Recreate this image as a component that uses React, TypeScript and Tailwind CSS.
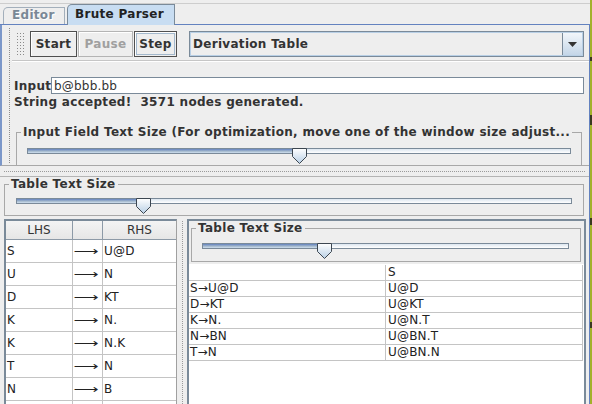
import React from "react";

const F = "font-['DejaVu_Sans',sans-serif]";

function Thumb({ gid }: { gid: string }) {
  return (
    <svg width="15" height="16" viewBox="0 0 15 16" className="block">
      <defs>
        <linearGradient id={gid} x1="0" y1="0" x2="0" y2="1">
          <stop offset="0" stopColor="#ffffff" />
          <stop offset="1" stopColor="#b8cfe5" />
        </linearGradient>
      </defs>
      <path d="M0.5 0.5 H14.5 V8.5 L7.5 15.5 L0.5 8.5 Z" fill={`url(#${gid})`} stroke="#3c4650" />
    </svg>
  );
}

function Slider({ track, fill, thumb, gid }: { track: string; fill: string; thumb: string; gid: string }) {
  return (
    <div className={`relative h-[16px] ${track}`}>
      <div className="mt-[5px] h-[6px] w-full border border-[#7a8a99] bg-[linear-gradient(#dce6f0,#ffffff)] flex">
        <div className={`h-full ${fill} bg-[linear-gradient(#6382bf,#a3b8cc_55%,#d0e0f0)]`} />
      </div>
      <div className={`absolute top-0 ${thumb}`}>
        <Thumb gid={gid} />
      </div>
    </div>
  );
}

function Legend({ children }: { children: React.ReactNode }) {
  return (
    <legend className="ml-[4px] px-[2px] text-[12px] font-bold leading-[14px] tracking-[0.3px] text-[#333333] whitespace-nowrap">
      {children}
    </legend>
  );
}

const lhsRows = [
  ["S", "U@D"],
  ["U", "N"],
  ["D", "KT"],
  ["K", "N."],
  ["K", "N.K"],
  ["T", "N"],
  ["N", "B"],
  ["", ""],
];

const derivRows = [
  ["S\u2192U@D", "U@D"],
  ["D\u2192KT", "U@KT"],
  ["K\u2192N.", "U@N.T"],
  ["N\u2192BN", "U@BN.T"],
  ["T\u2192N", "U@BN.N"],
];

export default function App() {
  return (
    <div className={`w-[592px] h-[404px] bg-[#eeeeee] overflow-hidden flex ${F} text-[#333333]`}>
      <div className="w-[590px] h-full flex flex-col">
        {/* top strip */}
        <div className="h-[4px] shrink-0 border-b border-[#cdcdcd]" />
        {/* tabs */}
        <div className="h-[20px] shrink-0 flex items-end pl-[3px]">
          <div className="h-[17px] w-[62px] border-t border-l border-r border-[#a3afbb] rounded-tl-[5px] pl-[8px] text-[12px] font-bold leading-[14px] tracking-[0.3px] text-[#7a8896] [text-shadow:1px_1px_0_#ffffff]">
            Editor
          </div>
          <div className="ml-[2px] h-[21px] w-[108px] -mb-[1px] relative z-10 border-t border-l border-r border-[#7a8a99] rounded-tl-[5px] bg-[#c8ddf2] pl-[7px] text-[12px] font-bold leading-[19px] tracking-[0.3px] text-[#222222]">
            Brute Parser
          </div>
        </div>
        {/* content */}
        <div className="flex-1 min-h-0 flex flex-col border-t border-r border-[#6382bf]">
          {/* top section */}
          <div className="h-[141px] shrink-0 flex border-b border-[#a8a8a8] border-l-2 border-l-[#7b97c9]">
            <div className="w-[10px] shrink-0 pt-[3px] pb-[2px]">
              <div className="ml-[7px] h-full border-l border-dotted border-[#8c8c8c]" />
            </div>
            <div className="flex-1 flex flex-col">
              {/* toolbar */}
              <div className="h-[36px] shrink-0 flex items-start pt-[6px] border-b border-[#c6c6c6] shadow-[0_1px_0_#ffffff]">
                <div className="ml-[4px] mt-[1px] w-[10px] h-[25px] bg-[radial-gradient(#8a8a8a_0.7px,transparent_0.8px)] bg-[length:3px_3px]" />
                <div className="ml-[4px] w-[47px] h-[26px] border border-[#4f4f4f] shadow-[inset_1px_1px_0_#ffffff] flex items-center justify-center text-[12px] font-bold leading-[14px] tracking-[0.3px] text-[#333333]">
                  Start
                </div>
                <div className="ml-[1px] w-[55px] h-[26px] border border-[#b4b4b4] shadow-[inset_1px_1px_0_#ffffff] flex items-center justify-center text-[12px] font-bold leading-[14px] tracking-[0.3px] text-[#a0a0a0]">
                  Pause
                </div>
                <div className="ml-[1px] w-[43px] h-[26px] border border-[#4f4f4f] shadow-[inset_1px_1px_0_#ffffff] p-[1px] flex">
                  <div className="flex-1 border border-[#a3b8cc] flex items-center justify-center text-[12px] font-bold leading-[14px] tracking-[0.3px] text-[#333333]">
                    Step
                  </div>
                </div>
                <div className="ml-[12px] w-[395px] h-[26px] border border-[#7a8a99] shadow-[inset_0_0_0_1px_#b8cfe5] bg-[#eeeeee] flex">
                  <div className="flex-1 pl-[3px] flex items-center text-[12px] font-bold leading-[14px] tracking-[0.3px] text-[#333333]">
                    Derivation Table
                  </div>
                  <div className="w-[20px] my-[1px] mr-[1px] border-l border-[#7a8a99] bg-[linear-gradient(#f2f6fa,#dbe6f1_50%,#c4d6e8)] flex items-center justify-center">
                    <svg width="9" height="5" viewBox="0 0 9 5" className="block">
                      <path d="M0 0 H9 L4.5 5 Z" fill="#333333" />
                    </svg>
                  </div>
                </div>
              </div>
              {/* input row */}
              <div className="mt-[16px] h-[17px] flex items-center">
                <div className="pl-[2px] w-[39px] text-[12px] font-bold leading-[14px] tracking-[0.3px] text-[#333333]">Input</div>
                <div className="w-[533px] h-[17px] border border-[#7a8a99] bg-white pl-[2px] flex items-center text-[12px] leading-[14px] tracking-[0.2px] text-[#333333]">
                  b@bbb.bb
                </div>
              </div>
              <div className="mt-[1px] pl-[2px] h-[14px] text-[12px] font-bold leading-[14px] tracking-[0.3px] text-[#333333] whitespace-pre">
                String accepted!  3571 nodes generated.
              </div>
              <fieldset className="mt-[16px] ml-[4px] w-[566px] border border-[#a8a8a8]">
                <Legend>Input Field Text Size (For optimization, move one of the window size adjust...</Legend>
                <div className="pl-[10px] pt-[4px] pb-[1px]">
                  <Slider track="w-[544px]" fill="w-[272px]" thumb="left-[265px]" gid="g1" />
                </div>
              </fieldset>
            </div>
          </div>
          {/* horizontal divider */}
          <div className="h-[10px] shrink-0 pt-[5px] px-[4px]">
            <div className="border-t border-dotted border-[#9a9a9a]" />
          </div>
          {/* lower section */}
          <div className="flex-1 min-h-0 flex flex-col border-t border-[#b4b4b4]">
            <fieldset className="ml-[4px] w-[580px] border border-[#a8a8a8] shrink-0">
              <Legend>Table Text Size</Legend>
              <div className="pl-[11px] pt-[2px] pb-[1px]">
                <Slider track="w-[556px]" fill="w-[127px]" thumb="left-[120px]" gid="g2" />
              </div>
            </fieldset>
            <div className="mt-[3px] ml-[4px] flex-1 min-h-0 flex">
              {/* left table */}
              <div className="w-[173px] border-l-2 border-t-2 border-[#7a8a99] border-r border-r-[#a0a0a0] bg-white flex flex-col overflow-hidden">
                <div className="h-[19px] shrink-0 flex bg-[linear-gradient(#f4f4f4,#e6e6e6)] border-b border-[#8d9aa7] text-[12px] leading-[14px] text-[#333333]">
                  <div className="w-[67px] border-r border-[#8d9aa7] flex items-center justify-center">LHS</div>
                  <div className="w-[30px] border-r border-[#8d9aa7]" />
                  <div className="flex-1 flex items-center justify-center">RHS</div>
                </div>
                {lhsRows.map((r, i) => (
                  <div key={i} className="h-[23px] shrink-0 flex border-b border-[#c4c4c4] text-[12px] leading-[14px] tracking-[0.2px] text-[#222222]">
                    <div className="w-[67px] border-r border-[#c4c4c4] pl-[1px] flex items-center">{r[0]}</div>
                    <div className="w-[30px] border-r border-[#c4c4c4] pr-[4px] flex items-center justify-end">
                      <span className="inline-block origin-right scale-x-[1.45]">{r[0] ? "\u27F6" : ""}</span>
                    </div>
                    <div className="flex-1 pl-[1px] flex items-center">{r[1]}</div>
                  </div>
                ))}
              </div>
              {/* vertical divider */}
              <div className="w-[10px] shrink-0 pt-[2px]">
                <div className="ml-[5px] h-full border-l border-dotted border-[#9a9a9a]" />
              </div>
              {/* right panel */}
              <div className="w-[399px] shrink-0 border-l-2 border-t-2 border-r-2 border-[#7a8a99] flex flex-col">
                <fieldset className="ml-[2px] w-[390px] border border-[#a8a8a8] shrink-0">
                  <Legend>Table Text Size</Legend>
                  <div className="pl-[10px] pt-[3px] pb-[2px]">
                    <Slider track="w-[367px]" fill="w-[122px]" thumb="left-[115px]" gid="g3" />
                  </div>
                </fieldset>
                <div className="mt-[2px] flex-1 bg-white pt-[1px]">
                  <div className="w-[394px]">
                    <div className="h-[16px] flex border-b border-[#c4c4c4] text-[12px] leading-[15px] tracking-[0.2px] text-[#222222]">
                      <div className="w-[197px] border-r border-[#c4c4c4]" />
                      <div className="w-[197px] border-r border-[#c4c4c4] pl-[2px]">S</div>
                    </div>
                    {derivRows.map((r, i) => (
                      <div key={i} className="h-[16px] flex border-b border-[#c4c4c4] text-[12px] leading-[15px] tracking-[0.2px] text-[#222222]">
                        <div className="w-[197px] border-r border-[#c4c4c4] pl-[1px]">{r[0]}</div>
                        <div className="w-[197px] border-r border-[#c4c4c4] pl-[2px]">{r[1]}</div>
                      </div>
                    ))}
                  </div>
                </div>
              </div>
            </div>
          </div>
        </div>
      </div>
      {/* right edge stripe */}
      <div className="w-[2px] h-full flex flex-col bg-[#a3b12a]">
        <div className="h-[57px] shrink-0" />
        <div className="h-[4px] shrink-0 bg-[#3a3a20]" />
        <div className="h-[54px] shrink-0" />
        <div className="h-[10px] shrink-0 bg-[#3a3a20]" />
        <div className="h-[93px] shrink-0" />
        <div className="h-[7px] shrink-0 bg-[#3a3a20]" />
        <div className="h-[97px] shrink-0" />
        <div className="h-[6px] shrink-0 bg-[#3a3a20]" />
      </div>
    </div>
  );
}
